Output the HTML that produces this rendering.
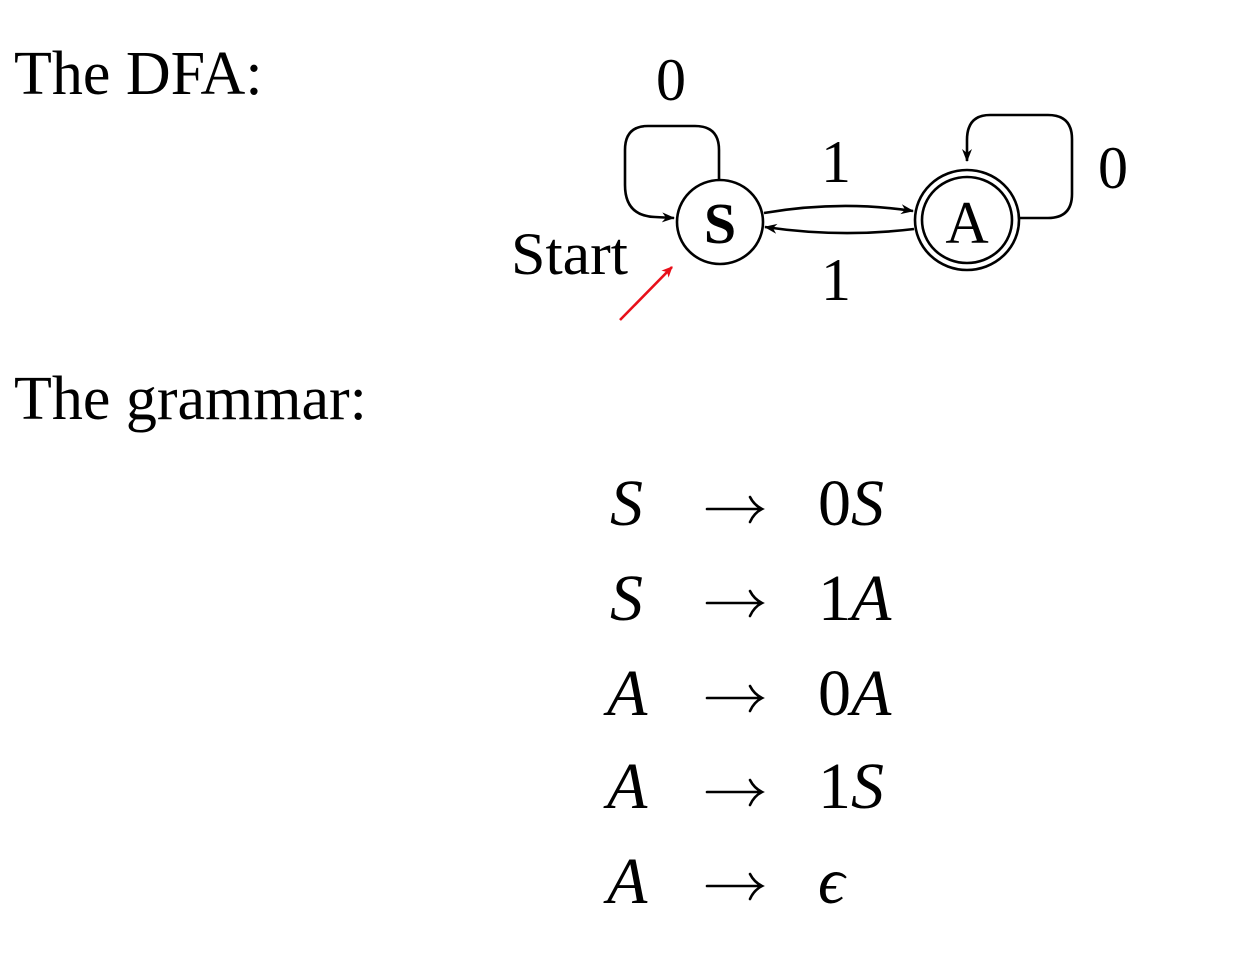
<!DOCTYPE html>
<html><head><meta charset="utf-8"><style>
html,body{margin:0;padding:0;background:#fff;}
svg{display:block;}
text{font-family:"Liberation Serif",serif;fill:#000;}
</style></head><body>
<svg width="1254" height="962" viewBox="0 0 1254 962" xmlns="http://www.w3.org/2000/svg">
<defs>
<marker id="ah" markerWidth="14" markerHeight="12" refX="12" refY="6" orient="auto" markerUnits="userSpaceOnUse"><path d="M0,1 L13,6 L0,11 L4,6 Z" fill="#000"/></marker>
<marker id="ahr" markerWidth="12" markerHeight="12" refX="10" refY="6" orient="auto" markerUnits="userSpaceOnUse"><path d="M0,1 L11,6 L0,11 L3,6 Z" fill="#e8101a"/></marker>
</defs>
<text x="14" y="94" font-size="62">The DFA:</text>
<text x="14" y="419" font-size="62">The grammar:</text>

<g fill="none" stroke="#000" stroke-width="2.6">
<ellipse cx="720" cy="222" rx="43" ry="42"/>
<ellipse cx="967" cy="220" rx="52" ry="50"/>
<ellipse cx="967" cy="220" rx="45" ry="43"/>
<path d="M719,180 L719,150 Q719,126 695,126 L648,126 Q625,126 625,150 L625,185 Q625,216 655,217 L674,218" marker-end="url(#ah)"/>
<path d="M1020,218 L1048,218 Q1072,218 1072,194 L1072,139 Q1072,115 1048,115 L990,115 Q967,115 967,140 L967,161" marker-end="url(#ah)"/>
<path d="M764,213 Q840,200 913,211" marker-end="url(#ah)"/>
<path d="M914,229 Q840,238 765,227" marker-end="url(#ah)"/>
</g>
<path d="M620,320 L672,267" stroke="#e8101a" stroke-width="2.6" fill="none" marker-end="url(#ahr)"/>

<text x="720" y="243" font-size="58" font-weight="bold" text-anchor="middle">S</text>
<text x="967" y="243" font-size="60" text-anchor="middle">A</text>
<text x="671" y="100" font-size="60" text-anchor="middle">0</text>
<text x="836" y="182" font-size="60" text-anchor="middle">1</text>
<text x="1113" y="188" font-size="60" text-anchor="middle">0</text>
<text x="836" y="300" font-size="60" text-anchor="middle">1</text>
<text x="511" y="274" font-size="60" textLength="117" lengthAdjust="spacingAndGlyphs">Start</text>

<g font-size="66">
<text x="610" y="525" font-style="italic">S</text><text x="818" y="525">0<tspan font-style="italic">S</tspan></text>
<text x="610" y="620" font-style="italic">S</text><text x="818" y="620">1<tspan font-style="italic">A</tspan></text>
<text x="607" y="715" font-style="italic">A</text><text x="818" y="715">0<tspan font-style="italic">A</tspan></text>
<text x="607" y="808" font-style="italic">A</text><text x="818" y="808">1<tspan font-style="italic">S</tspan></text>
<text x="607" y="903" font-style="italic">A</text><text x="818" y="903" font-style="italic">ϵ</text>
</g>
<g fill="none" stroke="#000" stroke-width="2.6" stroke-linecap="round">
<path d="M707,509 L761,509 M750,497 Q754,505 762,509 Q754,513 750,522"/>
<path d="M707,603 L761,603 M750,591 Q754,599 762,603 Q754,607 750,616"/>
<path d="M707,698 L761,698 M750,686 Q754,694 762,698 Q754,702 750,711"/>
<path d="M707,792 L761,792 M750,780 Q754,788 762,792 Q754,796 750,805"/>
<path d="M707,886 L761,886 M750,874 Q754,882 762,886 Q754,890 750,899"/>
</g>
</svg>
</body></html>
